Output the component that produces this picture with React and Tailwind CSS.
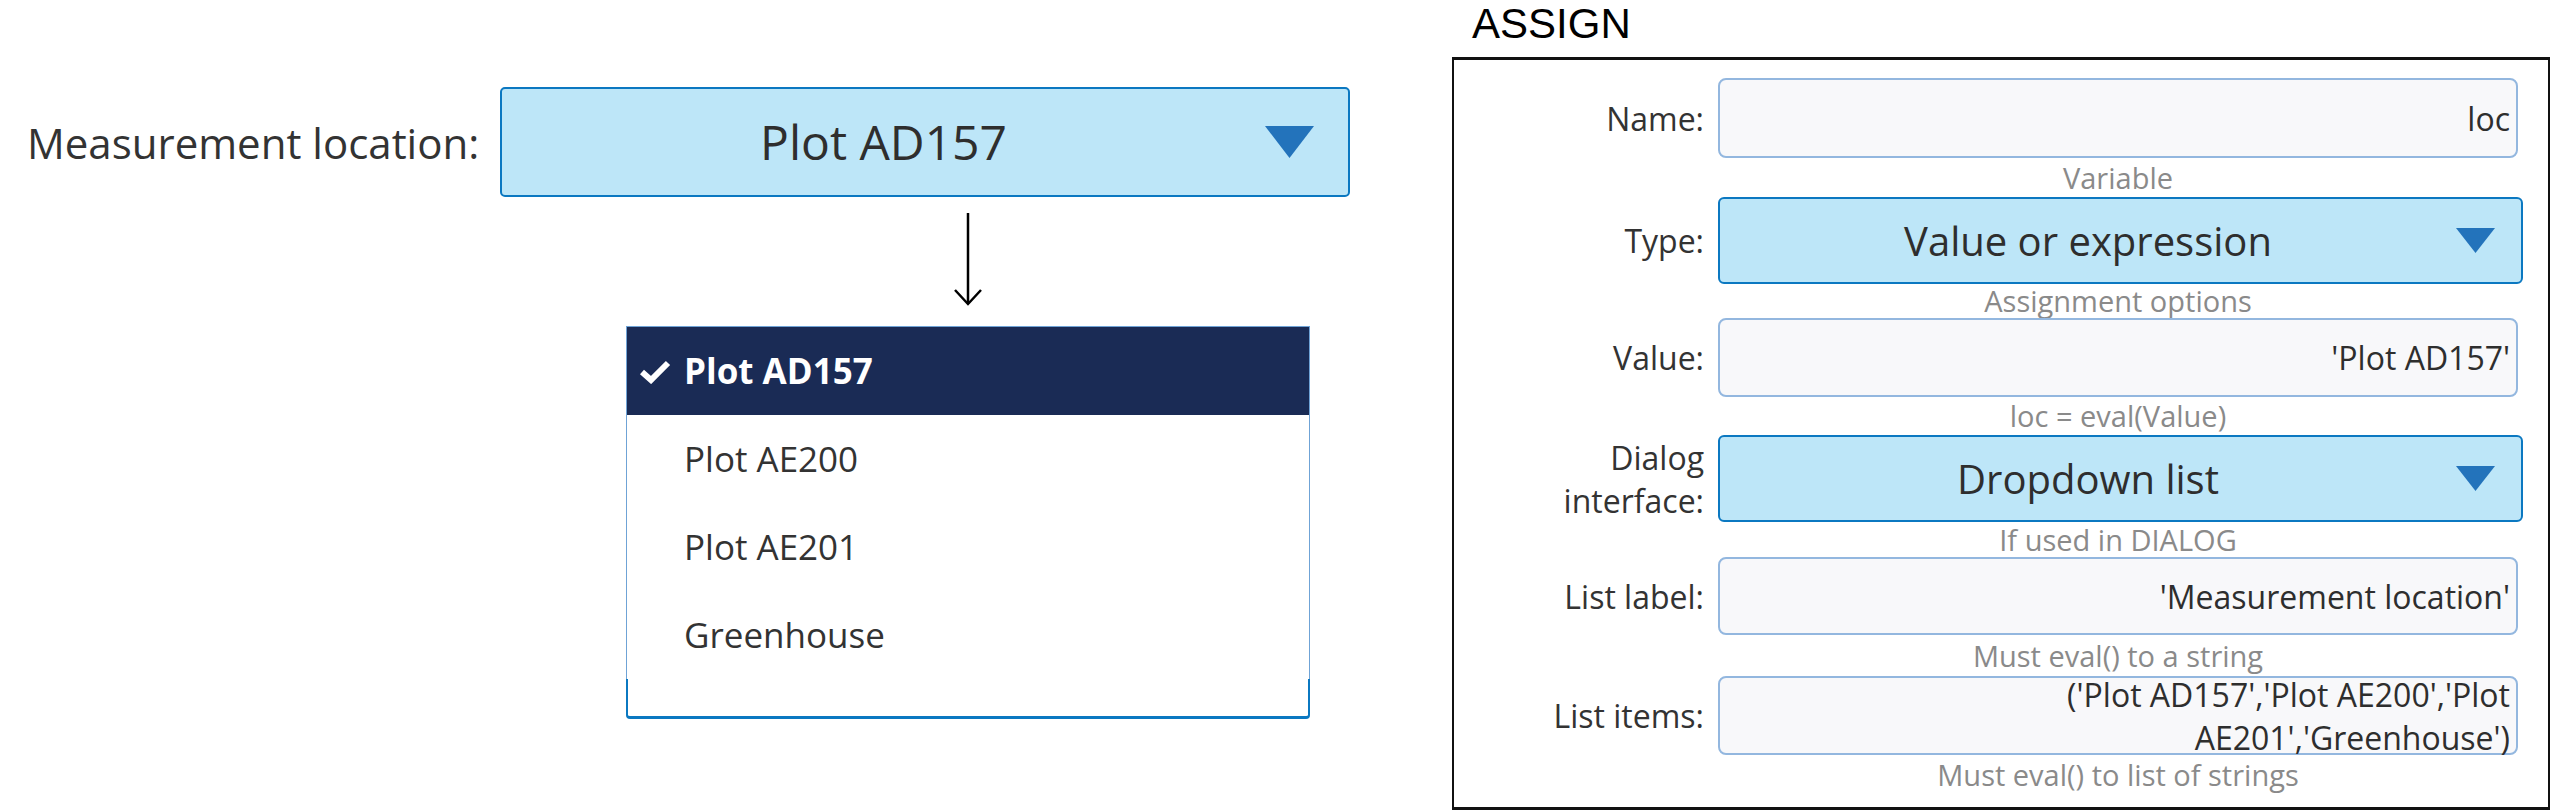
import React from "react";

const TriangleDown = ({ w, h }) => (
  <svg width={w} height={h} viewBox={`0 0 ${w} ${h}`} className="shrink-0">
    <polygon points={`0,0 ${w},0 ${w / 2},${h}`} fill="#2373bb" />
  </svg>
);

const Check = () => (
  <svg width="32" height="25" viewBox="0 0 32 25">
    <path d="M3 13 L12 21 L29 4" fill="none" stroke="#ffffff" strokeWidth="6" />
  </svg>
);

const DownArrow = () => (
  <svg width="30" height="93" viewBox="0 0 30 93" className="mx-auto block">
    <path d="M15 0 L15 91" stroke="#000" strokeWidth="2.5" />
    <path d="M2 77 L15 91 L28 77" fill="none" stroke="#000" strokeWidth="2.5" />
  </svg>
);

const options = ["Plot AD157", "Plot AE200", "Plot AE201", "Greenhouse"];

// box / help heights measured from the reference
const fields = [
  { label: "Name:", kind: "input", value: "loc", help: "Variable", box: "h-[80px]", gap: "h-[39px] leading-[39px]" },
  { label: "Type:", kind: "select", value: "Value or expression", help: "Assignment options", box: "h-[87px]", gap: "h-[34px] leading-[34px]" },
  { label: "Value:", kind: "input", value: "'Plot AD157'", help: "loc = eval(Value)", box: "h-[79px]", gap: "h-[38px] leading-[38px]" },
  { label: ["Dialog", "interface:"], kind: "select", value: "Dropdown list", help: "If used in DIALOG", box: "h-[87px]", gap: "h-[35px] leading-[35px]" },
  { label: "List label:", kind: "input", value: "'Measurement location'", help: "Must eval() to a string", box: "h-[78px]", gap: "h-[41px] leading-[41px]" },
  {
    label: "List items:",
    kind: "input",
    value: ["('Plot AD157','Plot AE200','Plot", "AE201','Greenhouse')"],
    help: "Must eval() to list of strings",
    box: "h-[79px]",
    gap: "h-[40px] leading-[40px]",
  },
];

const Field = ({ field }) => (
  <div>
    <div className="flex items-center gap-[14px]">
      <div className="w-[250px] shrink-0 text-right text-[32px] leading-[43px] text-[#333]">
        {Array.isArray(field.label)
          ? field.label.map((l) => <div key={l}>{l}</div>)
          : field.label}
      </div>
      {field.kind === "input" ? (
        <div className={`${field.box} w-[800px] flex items-center justify-end pr-[6px] border-2 border-[#93b7df] rounded-[8px] bg-[#f8f8fa] text-[32px] leading-[43px] text-[#2e2e2e] text-right whitespace-nowrap`}>
          {Array.isArray(field.value) ? (
            <div>
              {field.value[0]}
              <br />
              {field.value[1]}
            </div>
          ) : (
            field.value
          )}
        </div>
      ) : (
        <div className={`${field.box} w-[805px] flex items-center border-2 border-[#0b78c1] rounded-[6px] bg-[#bde6f8]`}>
          <div className="flex-1 text-center text-[40px] text-[#2e2e2e]">{field.value}</div>
          <div className="mr-[26px]">
            <TriangleDown w={39} h={25} />
          </div>
        </div>
      )}
    </div>
    <div className={`${field.gap} ml-[264px] w-[800px] text-center text-[29px] text-[#8a8a8a]`}>
      {field.help}
    </div>
  </div>
);

export default function App() {
  return (
    <div className="w-[2552px] h-[812px] bg-white flex font-['Open_Sans',sans-serif] overflow-hidden">
      {/* left: the rendered dropdown */}
      <div className="w-[1452px] shrink-0 flex flex-col pt-[87px] pl-[27px]">
        <div className="flex items-center">
          <div className="w-[473px] shrink-0 text-[42px] text-[#333] whitespace-nowrap">
            Measurement location:
          </div>
          <div className="w-[850px] h-[110px] flex items-center border-2 border-[#0b78c1] rounded-[5px] bg-[#bde6f8]">
            <div className="flex-1 text-center text-[48px] text-[#2e2e2e]">Plot AD157</div>
            <div className="mr-[34px]">
              <TriangleDown w={49} h={32} />
            </div>
          </div>
        </div>

        <div className="ml-[599px] w-[684px]">
          <div className="mt-[16px]">
            <DownArrow />
          </div>
          <div className="mt-[20px]">
            <div className="border-t border-x border-[#6fa3d6]">
              {options.map((opt, i) => (
                <div
                  key={opt}
                  className={
                    i === 0
                      ? "h-[88px] flex items-center pl-[12px] bg-[#1a2b55] text-white font-bold text-[35px]"
                      : "h-[88px] flex items-center pl-[12px] text-[#333] text-[35px]"
                  }
                >
                  <div className="w-[45px] shrink-0">{i === 0 && <Check />}</div>
                  {opt}
                </div>
              ))}
            </div>
            <div className="h-[40px] border-x-2 border-b-[3px] border-[#0b78c1] rounded-b-[4px]" />
          </div>
        </div>
      </div>

      {/* right: ASSIGN block */}
      <div className="flex-1 flex flex-col">
        <div className="pl-[20px] h-[48px] text-[42px] leading-[48px] text-black font-['Liberation_Sans',Arial,sans-serif]">
          ASSIGN
        </div>
        <div className="mt-[9px] mr-[2px] border-2 border-t-[3px] border-b-[3px] border-[#111] pt-[18px] pb-[12px]">
          {fields.map((f) => (
            <Field key={f.help} field={f} />
          ))}
        </div>
      </div>
    </div>
  );
}
